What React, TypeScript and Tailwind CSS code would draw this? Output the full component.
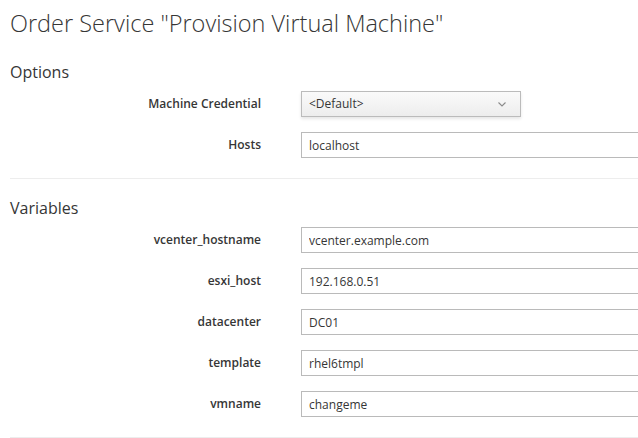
import React from 'react';

const OPTIONS = [{ label: 'Hosts', value: 'localhost' }];

const VARIABLES = [
  { label: 'vcenter_hostname', value: 'vcenter.example.com' },
  { label: 'esxi_host', value: '192.168.0.51' },
  { label: 'datacenter', value: 'DC01' },
  { label: 'template', value: 'rhel6tmpl' },
  { label: 'vmname', value: 'changeme' },
];

function Row({ label, children }: { label: string; children: React.ReactNode }) {
  return (
    <div className="flex items-center h-[26px] mb-[15px] last:mb-0">
      <label className="w-[251px] shrink-0 text-right text-[12px] font-semibold text-[#363636] leading-[26px]">
        {label}
      </label>
      <div className="ml-[40px] shrink-0">{children}</div>
    </div>
  );
}

function TextField({ value }: { value: string }) {
  return (
    <input
      type="text"
      defaultValue={value}
      className="block w-[360px] h-[26px] px-[7px] border border-[#bababa] bg-white text-[12px] text-[#363636] outline-none"
    />
  );
}

export default function App() {
  return (
    <div
      className="w-[638px] h-[438px] overflow-hidden bg-white pl-[10px]"
      style={{ fontFamily: '"Open Sans", "Noto Sans", sans-serif' }}
    >
      <h1 className="mt-[9px] text-[23.5px] leading-[28px] font-light text-[#363636] whitespace-nowrap">
        Order Service "Provision Virtual Machine"
      </h1>

      {/* Options */}
      <h2 className="mt-[25px] text-[16px] leading-[20px] text-[#363636]">Options</h2>
      <div className="mt-[9px] pb-[20px] border-b border-[#ededed]">
        <Row label="Machine Credential">
          <button
            type="button"
            className="flex items-center justify-between w-[220px] h-[26px] pl-[7px] pr-[14px] border border-[#bbbbbb] bg-gradient-to-b from-[#fafafa] to-[#ededed] shadow-[0_2px_3px_rgba(3,3,3,0.1)] text-[12px] text-[#363636]"
          >
            <span>&lt;Default&gt;</span>
            <svg width="8" height="5" viewBox="0 0 8 5" fill="none">
              <path d="M0.5 0.5 L4 4 L7.5 0.5" stroke="#8a8a8a" strokeWidth="1.1" />
            </svg>
          </button>
        </Row>
        {OPTIONS.map((o) => (
          <Row key={o.label} label={o.label}>
            <TextField value={o.value} />
          </Row>
        ))}
      </div>

      {/* Variables */}
      <h2 className="mt-[19px] text-[16px] leading-[20px] text-[#363636]">Variables</h2>
      <div className="mt-[9px] pb-[20px] border-b border-[#ededed]">
        {VARIABLES.map((v) => (
          <Row key={v.label} label={v.label}>
            <TextField value={v.value} />
          </Row>
        ))}
      </div>
    </div>
  );
}
